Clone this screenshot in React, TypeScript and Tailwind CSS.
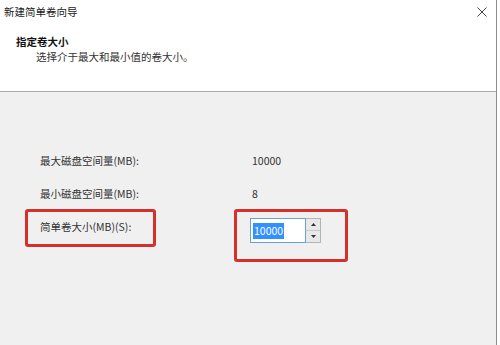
import type { FC } from "react";

const font = "font-['Noto_Sans_CJK_SC','Noto_Sans',sans-serif]";

const Row: FC<{ label: string; value: string }> = ({ label, value }) => (
  <div className="flex h-[33px] items-center">
    <div className="w-[212px]">{label}</div>
    <div>{value}</div>
  </div>
);

const Spinner: FC = () => (
  <div className="flex h-[25px] w-[15px] flex-col border border-l-0 border-[#b4b4b4] bg-[#e8e8e8]">
    <div className="flex flex-1 items-center justify-center border-b border-[#c8c8c8]">
      <svg width="5" height="3" viewBox="0 0 5 3">
        <path d="M0 3 L2.5 0 L5 3 Z" fill="#333" />
      </svg>
    </div>
    <div className="flex flex-1 items-center justify-center">
      <svg width="5" height="3" viewBox="0 0 5 3">
        <path d="M0 0 L2.5 3 L5 0 Z" fill="#333" />
      </svg>
    </div>
  </div>
);

const App: FC = () => {
  return (
    <div className={`relative flex h-[345px] w-[500px] overflow-hidden bg-white text-[10.5px] text-[#333] ${font}`}>
      <div className="flex w-[497px] flex-col border-r border-[#8c8c8c]">
        {/* header */}
        <div className="h-[92px] shrink-0 border-b border-[#a8a8a8] bg-white">
          <div className="flex h-[24px] items-center justify-between pl-[4px] pr-[9px] text-[#222]">
            <span>新建简单卷向导</span>
            <svg width="10" height="10" viewBox="0 0 10 10">
              <path d="M0.5 0.5 L9.5 9.5 M9.5 0.5 L0.5 9.5" stroke="#444" strokeWidth="1" />
            </svg>
          </div>
          <div className="pl-[16px] pt-[10px] font-bold leading-[15px] text-[#111]">指定卷大小</div>
          <div className="pl-[36px] leading-[15px]">选择介于最大和最小值的卷大小。</div>
        </div>

        {/* body */}
        <div className="flex-1 bg-[#f0f0f0] pl-[40px] pt-[52px]">
          <Row label="最大磁盘空间量(MB):" value="10000" />
          <Row label="最小磁盘空间量(MB):" value="8" />
          <div className="flex h-[34px]">
            <div className="flex w-[210px] items-center">简单卷大小(MB)(S):</div>
            <div className="mt-[8px] flex">
              <div className="flex h-[25px] w-[56px] items-center border border-[#6c9fd6] bg-white pl-[2px]">
                <span className="bg-[#3390ff] px-[1px] leading-[16px] text-white">10000</span>
              </div>
              <Spinner />
            </div>
          </div>
        </div>
      </div>
      <div className="flex-1 bg-white" />

      {/* annotation boxes */}
      <div className="absolute left-[25px] top-[209px] h-[38px] w-[131px] rounded-[3px] border-[3px] border-[#d6302b]" />
      <div className="absolute left-[234px] top-[209px] h-[53px] w-[114px] rounded-[3px] border-[3px] border-[#d6302b]" />
    </div>
  );
};

export default App;
